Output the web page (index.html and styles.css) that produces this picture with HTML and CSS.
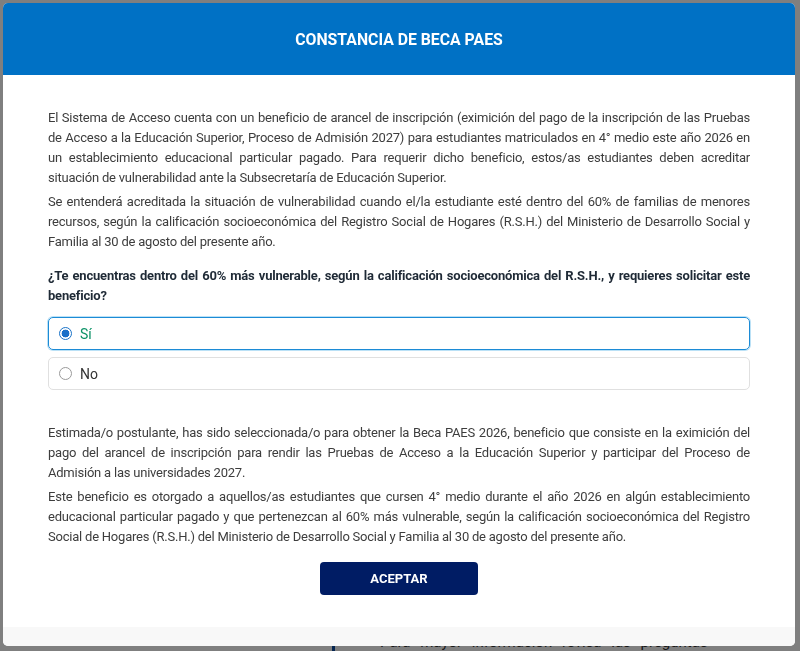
FILE: index.html
```html
<!DOCTYPE html>
<html lang="es">
<head>
<meta charset="utf-8">
<title>Constancia de Beca PAES</title>
<link rel="stylesheet" href="styles.css">
</head>
<body>
  <main class="page">
    <div class="page-note">
      <p>Para mayor información revisa las preguntas</p>
    </div>
  </main>

  <div class="backdrop"></div>

  <section class="modal" role="dialog" aria-labelledby="modal-title">
    <header class="modal-header">
      <h2 id="modal-title">CONSTANCIA DE BECA PAES</h2>
    </header>

    <div class="modal-body">
      <p class="text">El Sistema de Acceso cuenta con un beneficio de arancel de inscripción (eximición del pago de la inscripción de las Pruebas de Acceso a la Educación Superior, Proceso de Admisión 2027) para estudiantes matriculados en 4° medio este año 2026 en un establecimiento educacional particular pagado. Para requerir dicho beneficio, estos/as estudiantes deben acreditar situación de vulnerabilidad ante la Subsecretaría de Educación Superior.</p>
      <p class="text">Se entenderá acreditada la situación de vulnerabilidad cuando el/la estudiante esté dentro del 60% de familias de menores recursos, según la calificación socioeconómica del Registro Social de Hogares (R.S.H.) del Ministerio de Desarrollo Social y Familia al 30 de agosto del presente año.</p>

      <p class="question">¿Te encuentras dentro del 60% más vulnerable, según la calificación socioeconómica del R.S.H., y requieres solicitar este beneficio?</p>

      <div class="options">
        <label class="option option-selected">
          <span class="radio radio-on"></span>
          <span class="option-label">Sí</span>
        </label>
        <label class="option">
          <span class="radio"></span>
          <span class="option-label">No</span>
        </label>
      </div>

      <div class="result">
        <p class="text">Estimada/o postulante, has sido seleccionada/o para obtener la Beca PAES 2026, beneficio que consiste en la eximición del pago del arancel de inscripción para rendir las Pruebas de Acceso a la Educación Superior y participar del Proceso de Admisión a las universidades 2027.</p>
        <p class="text">Este beneficio es otorgado a aquellos/as estudiantes que cursen 4° medio durante el año 2026 en algún establecimiento educacional particular pagado y que pertenezcan al 60% más vulnerable, según la calificación socioeconómica del Registro Social de Hogares (R.S.H.) del Ministerio de Desarrollo Social y Familia al 30 de agosto del presente año.</p>
      </div>

      <div class="actions">
        <button class="btn-accept" type="button">ACEPTAR</button>
      </div>
    </div>

    <footer class="modal-footer"></footer>
  </section>
</body>
</html>
```

FILE: styles.css
```css
* {
  box-sizing: border-box;
}

html,
body {
  margin: 0;
  height: 100%;
}

body {
  font-family: Roboto, "Liberation Sans", Arial, sans-serif;
  background: #ffffff;
  color: #3a3a3a;
  overflow: hidden;
}

/* page behind the dialog */
.page {
  height: 100%;
  display: flex;
  flex-direction: column;
  justify-content: flex-end;
  padding-left: 332px;
}

.page-note {
  border-left: 3px solid #0a4aa0;
  height: 12px;
  padding-left: 45px;
}

.page-note p {
  margin: 0;
  font-size: 15px;
  line-height: 18px;
  color: #333;
  word-spacing: 6px;
  transform: translateY(-6px);
}

.backdrop {
  position: fixed;
  inset: 0;
  background: rgba(0, 0, 0, 0.5);
}

/* dialog */
.modal {
  position: fixed;
  left: 3px;
  top: 3px;
  width: 792px;
  height: 643px;
  background: #ffffff;
  border-radius: 5px;
  overflow: hidden;
  display: flex;
  flex-direction: column;
}

.modal-header {
  height: 72px;
  flex: none;
  background: #0071c5;
  display: flex;
  align-items: center;
  justify-content: center;
}

.modal-header h2 {
  margin: 0;
  color: #ffffff;
  font-size: 15.8px;
  font-weight: 700;
}

.modal-body {
  flex: 1;
  padding: 33px 45px 0;
}

.text {
  margin: 0 0 4px;
  font-size: 13px;
  line-height: 20px;
  letter-spacing: -0.22px;
  text-align: justify;
  color: #3d3d3d;
}

.question {
  margin: 14px 0 11px;
  font-size: 13px;
  line-height: 20px;
  font-weight: 700;
  letter-spacing: -0.2px;
  text-align: justify;
  color: #1f2a36;
}

.options {
  display: flex;
  flex-direction: column;
  gap: 7px;
}

.option {
  height: 33px;
  border: 1px solid #e0e0e0;
  border-radius: 5px;
  display: flex;
  align-items: center;
  gap: 8px;
  padding-left: 10px;
  font-size: 14px;
  color: #333;
}

.option-selected {
  border-color: #1c8bd6;
  box-shadow: 0 0 0 1px rgba(60, 170, 230, 0.35);
  color: #0b9266;
}

.radio {
  width: 13px;
  height: 13px;
  border-radius: 50%;
  border: 1px solid #9a9a9a;
  background: #fff;
  flex: none;
}

.radio-on {
  border: 1px solid #1a73c8;
  background: radial-gradient(circle, #1a6fc8 0 3.6px, #ffffff 4.2px);
}

.result {
  margin-top: 33px;
}

.actions {
  display: flex;
  justify-content: center;
  margin-top: 15px;
}

.btn-accept {
  width: 158px;
  height: 33px;
  border: none;
  border-radius: 4px;
  background: #001c64;
  color: #ffffff;
  font-family: Roboto, "Liberation Sans", Arial, sans-serif;
  font-size: 13px;
  font-weight: 700;
}

.modal-footer {
  height: 19px;
  flex: none;
  background: #f8f8f8;
}
```
